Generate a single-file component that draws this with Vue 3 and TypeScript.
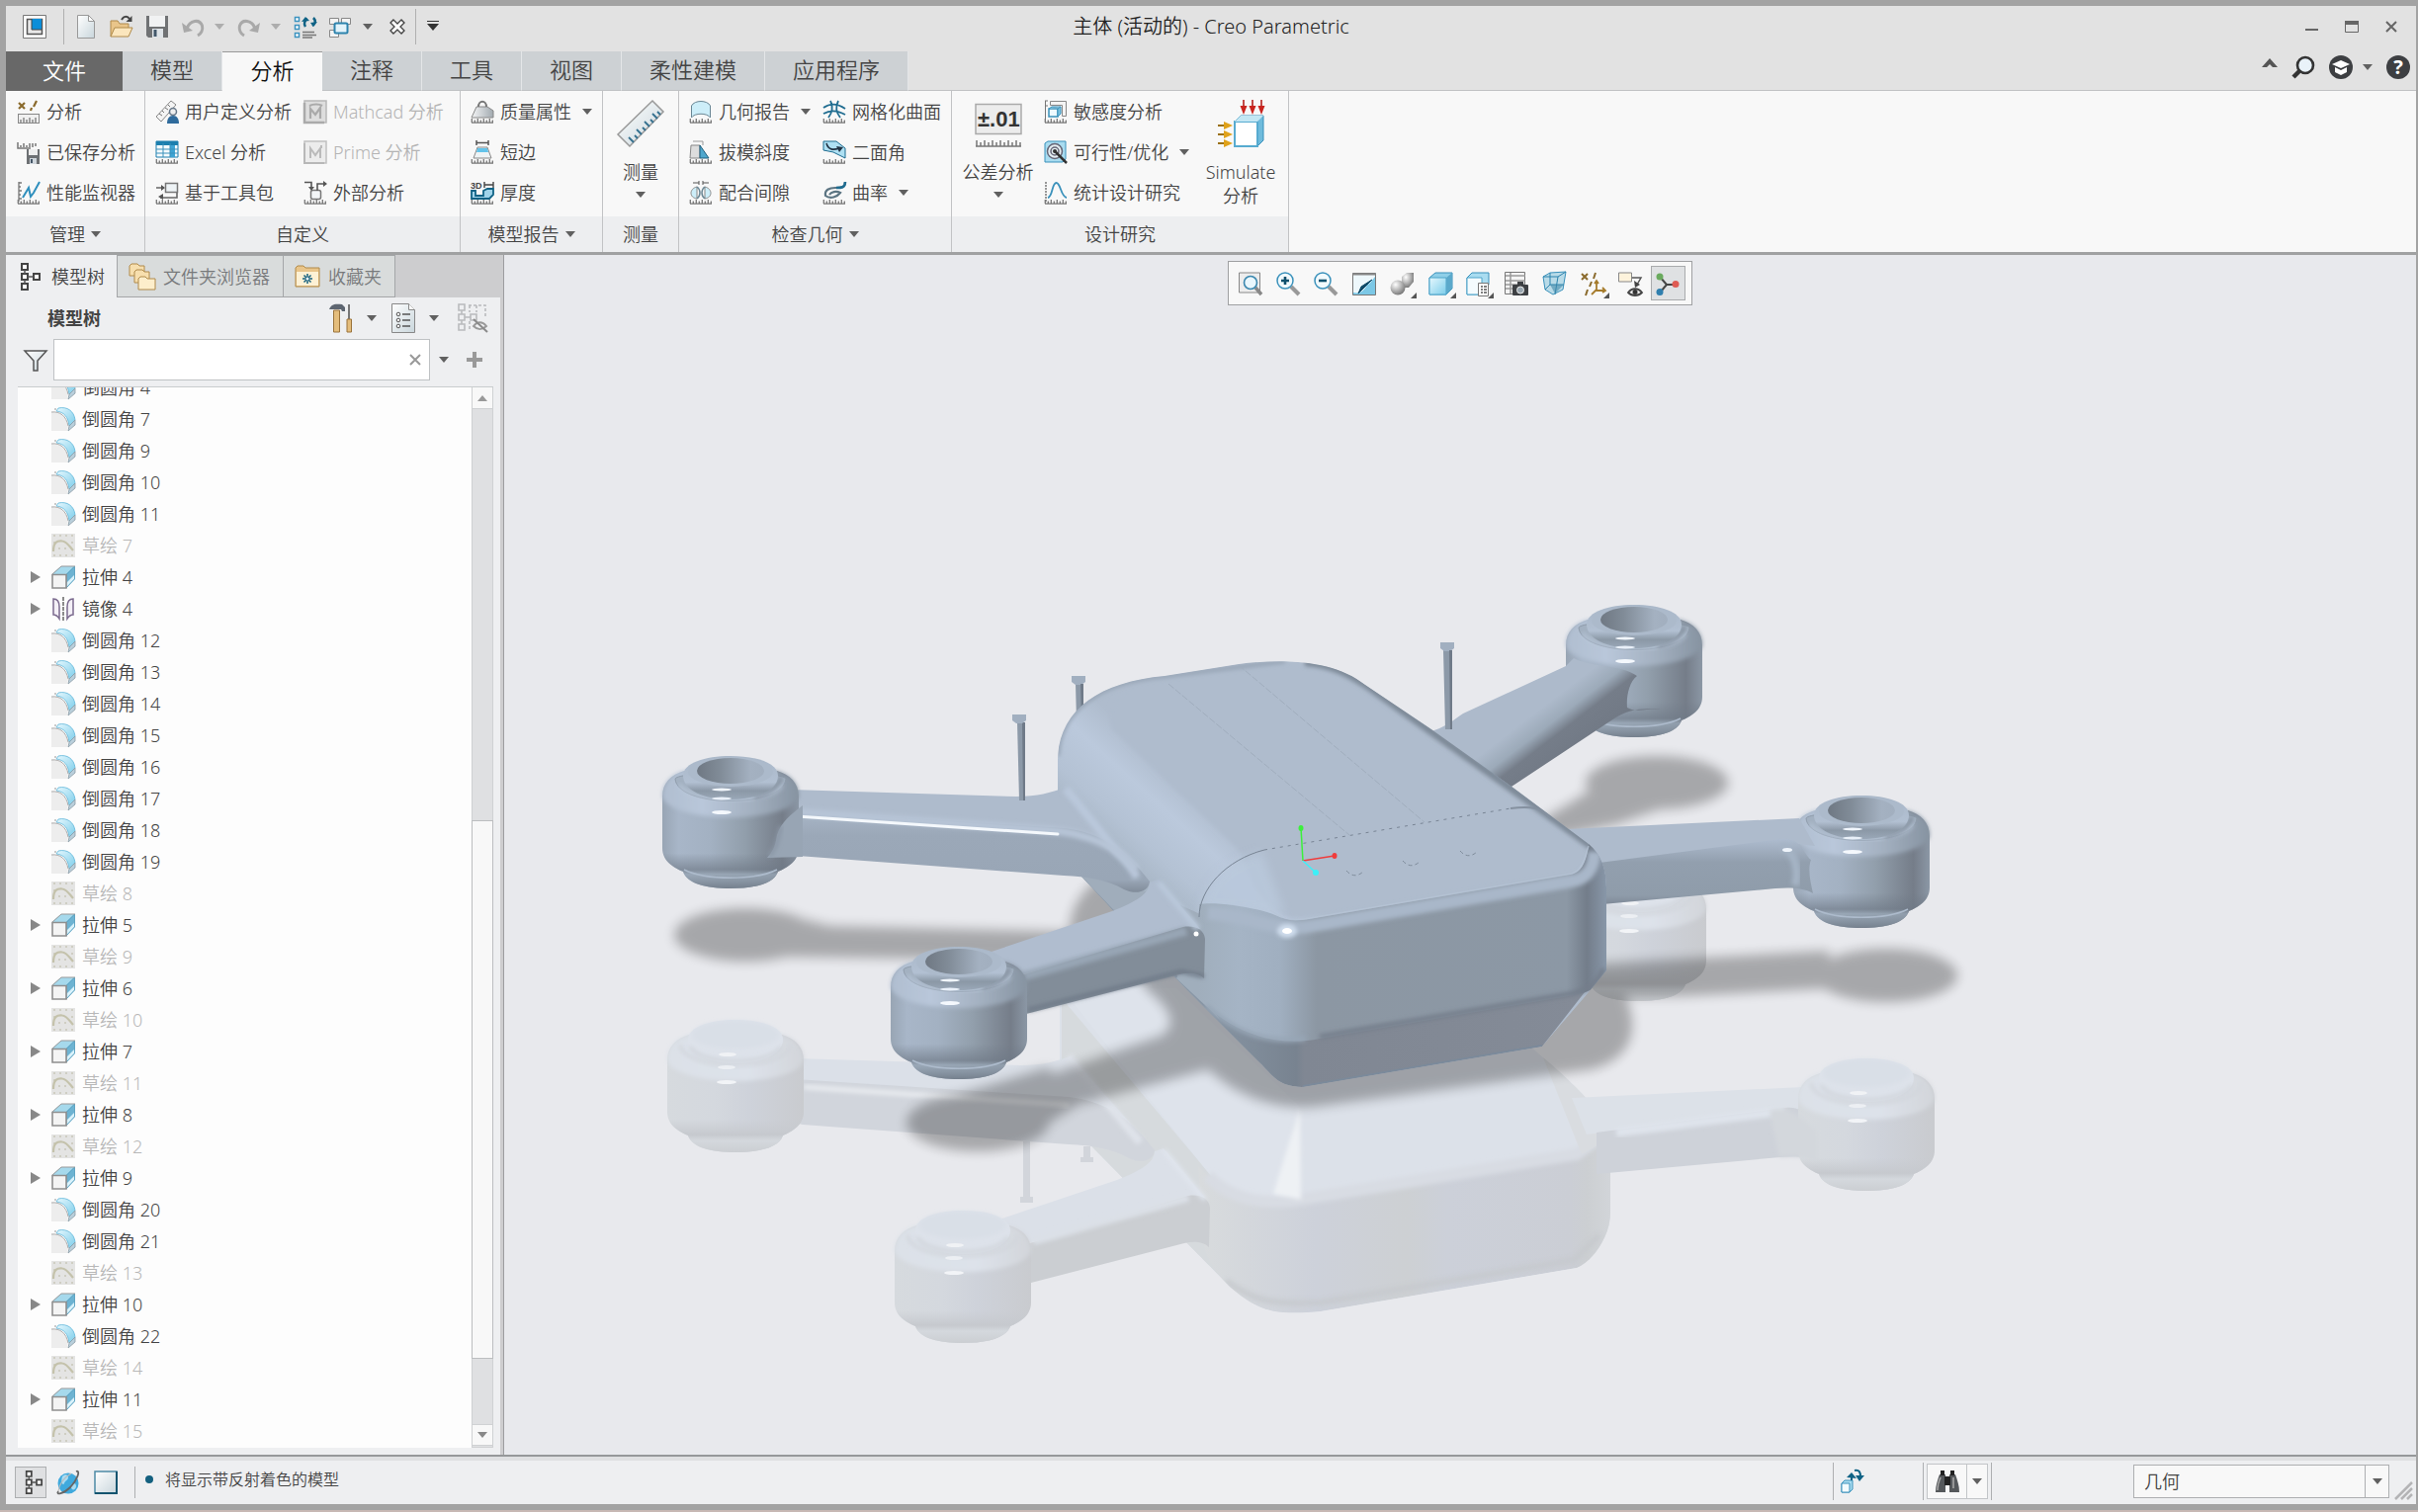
<script setup lang="ts">
interface Command { icon: string; label: string; menu?: boolean; off?: boolean }
interface Big { icon: string; lines: string[]; menu?: boolean }
interface Column { width: number; items?: Command[]; big?: Big }
interface Group { label: string; menu?: boolean; width: number; pad: number; columns: Column[] }

const ruler = (x = 1, w = 22): string => {
  let d = `M${x} 23.2h${w}`
  for (let i = 0; i <= w; i += 3) d += `M${x + i + 0.3} 23v${i % 6 === 0 ? -4 : -2.5}`
  return `<path d="${d}" stroke="#777" stroke-width="1.3" fill="none"/>`
}

const icons: Record<string, string> = {
  app: '<path d="M.5.5h23v23H.5z" fill="#fff" stroke="#777"/><path d="M4.500 4.500h15v15h-15z" fill="#e8e8e8" stroke="#555" stroke-width="1.500"/><path d="M9 4h10v11H9z" fill="#0a8ed9"/><path d="M9 4v11h10" fill="none" stroke="#444"/>',
  new: '<path d="M3.500.5h11l6 6v17h-17z" fill="url(#paper)" stroke="#999"/><path d="M14.500.5v6h6z" fill="#fff" stroke="#999"/>',
  open: '<path d="M1 22V6h7l2 3h9v5" fill="#e9c58a" stroke="#b08a4a"/><path d="M1 22l4-9h18l-4 9z" fill="#fbe6bd" stroke="#b08a4a"/><path d="M12 5c2-4 6-4 8-1" fill="none" stroke="#444" stroke-width="2"/><path d="M22.500 1v6h-6z" fill="#444"/>',
  save: '<path d="M1 1h22v22H3l-2-2z" fill="#707274"/><path d="M4 1h16v11H4z" fill="#f1f2f3"/><path d="M7 14h11v9H7z" fill="#dfe4e8"/><path d="M8.500 15h3v7h-3z" fill="#43586b"/>',
  undo: '<path d="M6 14C9 5 19 4 21.500 11c1 4-1 8-4.500 10" fill="none" stroke="#a9a9a9" stroke-width="3"/><path d="M1 8l2 10 9-2z" fill="#a9a9a9"/>',
  redo: '<path d="M18 14C15 5 5 4 2.500 11c-1 4 1 8 4.500 10" fill="none" stroke="#a9a9a9" stroke-width="3"/><path d="M23 8l-2 10-9-2z" fill="#a9a9a9"/>',
  regen: '<path d="M1.500 2.500h4v4h-4zM1.500 10.500h4v4h-4zM1.500 18.500h4v4h-4z" fill="#fff" stroke="#3c93c0" stroke-width="1.500"/><path d="M9 17.500h12M9 20.500h14M9 23h10" stroke="#777" stroke-width="1.500"/><path d="M12 12c-2-3-1-6 2-8M20 3c3 3 2 6-1 8" fill="none" stroke="#0f6285" stroke-width="2.500"/><path d="M8 7l4-5 4 4zM24 7l-4 5-3-4z" fill="#0f6285"/>',
  windows: '<path d="M.5 3.500h9v6h-9zM12.500 3.500h9v6h-9zM.5 15.500h9v7h-9z" fill="#f3f3f3" stroke="#888"/><rect x="5.500" y="8.500" width="13" height="10" rx="1.500" fill="#e3f3fa" stroke="#2d83ad" stroke-width="2"/>',
  closewin: '<path d="M6 6l12 12M18 6L6 18" stroke="#444" stroke-width="5.500"/><path d="M7 7l10 10M17 7L7 17" stroke="#fff" stroke-width="3"/>',
  analysis: '<path d="M2 3l6 6M8 3L2 9M20 1l-3 6M15 8l-1 3" stroke="#8a6a2c" stroke-width="2.200"/><rect x="1.500" y="14.500" width="21" height="9" fill="#f0f0f0" stroke="#888"/><path d="M4 23v-3M7 23v-5M10 23v-3M13 23v-5M16 23v-3M19 23v-5" stroke="#555"/>',
  saved: '<path d="M1 2v6h13M4 7V5M7 7V3M10 7V5M13 7V3M16 7V3M19 6V3" fill="none" stroke="#777" stroke-width="1.500"/><path d="M10 9h13v15H10z" fill="#6d7073"/><path d="M12 9h9v6h-9z" fill="#eee"/><path d="M13 18h7v6h-7z" fill="#cfd6dc"/><path d="M14 19h2v4h-2z" fill="#456"/>',
  monitor: `<path d="M2 1v20M2 2h3M2 6h2M2 10h3M2 14h2M2 18h3" stroke="#777" stroke-width="1.300"/><path d="M6 17l6-10 2 9 3-4 6-11" fill="none" stroke="#2f8fbd" stroke-width="2"/>${ruler()}`,
  userdef: '<path d="M1 17L16 1l5 4L6 22z" fill="#f4f4f4" stroke="#888"/><path d="M4 14l3 2M7 11l2 2M10 8l3 2M13 5l2 2" stroke="#777"/><circle cx="18" cy="12" r="3.500" fill="#eee" stroke="#678" stroke-width="1.500"/><path d="M12 24c0-5 2-8 6-8s6 3 6 8z" fill="#2f6b9c"/>',
  excel: `<path d="M1 1h22v16H1z" fill="#f4fafd" stroke="#1c7fae"/><path d="M1 1h22v4H1z" fill="#1c7fae"/><path d="M15 5h5v12h-5z" fill="#3ea4d4"/><path d="M1 9h22M1 13h22M8 3v14M15 3v14" stroke="#3a91bb"/>${ruler()}`,
  toolkit: `<path d="M10.500 2.500h12v9h-12z" fill="#eef3f6" stroke="#777" stroke-width="1.500"/><path d="M1 7h8M22 12v5H5" fill="none" stroke="#666" stroke-width="1.600"/><path d="M6 4l4 3-4 3zM8 13l-5 3 5 3z" fill="#555"/>${ruler()}`,
  mathcad: '<path d="M1 1h22v22H1z" fill="#dedede" stroke="#b8b8b8" stroke-width="1.500"/><path d="M1 3v20h20" fill="none" stroke="#aaa" stroke-width="2.500"/><path d="M7 19V9l5 6 5-7v11M6 6c4-2 10-2 13 0" fill="none" stroke="#aaa" stroke-width="2.200"/>',
  prime: '<path d="M1 1h22v22H1z" fill="#ececec" stroke="#c0c0c0" stroke-width="1.500"/><path d="M1 3v20h20" fill="none" stroke="#b8b8b8" stroke-width="2"/><path d="M7 18V8l5 7 5-7v10M18 5v3" fill="none" stroke="#bababa" stroke-width="2"/>',
  external: `<rect x="7.500" y="9.500" width="10" height="9" rx="2" fill="#f3f6f8" stroke="#777" stroke-width="1.500"/><path d="M1 1.500h7v6M14 10V3h8" fill="none" stroke="#555" stroke-width="1.600"/><path d="M5 6h6l-3 4zM20 0l4 3-4 3z" fill="#555"/>${ruler()}`,
  mass: `<path d="M6 7h11l6 4v7H1z" fill="url(#weight)" stroke="#888"/><path d="M8 7c0-7 8-7 8 0" fill="none" stroke="#777" stroke-width="2"/>${ruler()}`,
  edge: `<path d="M6 2.500h12M6 0v5M18 0v5" stroke="#555" stroke-width="1.500"/><path d="M7 7h10l4 11H3z" fill="#eef3f5" stroke="#888"/><path d="M7 8h10l1 4H6z" fill="#63c3ea"/>${ruler()}`,
  thick: `<text x="0" y="8" font-size="9" font-weight="700" font-family="Liberation Sans" fill="#444">3D</text><path d="M14 4h9M14 1v6M23 1v6" stroke="#444" stroke-width="1.400"/><path d="M1 10h4v5h8v-5l4-2h6v6l-4 4H1z" fill="#9fd3ea" stroke="#0f6285" stroke-width="1.800"/>${ruler()}`,
  measure: '<path d="M1 35L36 1l11 11L13 47z" fill="url(#paper)" stroke="#999" stroke-width="1.500"/><path d="M17 43l-5-5M21 39l-3-3M25 35l-5-5M29 31l-3-3M33 27l-5-5M37 23l-3-3M41 19l-5-5M44 15l-3-3" stroke="#34708f" stroke-width="1.800"/>',
  georep: `<path d="M2.500 18V6c3-6 16-6 19 0v12c-3-5-16-5-19 0z" fill="#cdeef9" stroke="#6a8795"/>${ruler()}`,
  draft: `<path d="M2 5h9v13H1z" fill="#ddd" stroke="#888"/><path d="M11 5l9 13h-9z" fill="#4fa7cd" stroke="#1f5f7d"/><path d="M4 1h10v4" fill="none" stroke="#999"/>${ruler()}`,
  fit: `<path d="M4 2h6M14 2h6M10 0v4M14 0v4" stroke="#555"/><path d="M8 6c-8 2-8 11 0 12zM16 6c8 2 8 11 0 12z" fill="#cdeef9" stroke="#888"/><path d="M8 6c4 3 4 9 0 12M16 6c-4 3-4 9 0 12" fill="none" stroke="#6a8795" stroke-width="1.500"/>${ruler()}`,
  mesh: `<path d="M1 8c7-5 15-4 22 1M1 14c7-4 15-3 22 1M8 1c3 5 2 12-2 17M16 1c-3 6-2 12 2 17" fill="none" stroke="#1f6c90" stroke-width="1.800"/>${ruler()}`,
  dihedral: `<path d="M1 1h13l9 7v10L11 12 1 10z" fill="#aee0f3" stroke="#1f6c90"/><path d="M4 3c2 7 7 7 13 5" fill="none" stroke="#234" stroke-width="1.600"/><path d="M14 6l7 1-4 5z" fill="#234"/>${ruler()}`,
  curv: `<path d="M23 1c0 6-4 6-10 6S2 9 3 15c5 4 12 1 15-3-4-2-9-1-11 2" fill="none" stroke="#5b7482" stroke-width="2.200"/><path d="M23 1c0 6-4 6-9 6" fill="none" stroke="#1f6c90" stroke-width="2.500"/>${ruler()}`,
  tol: '<path d="M1 4.500h46v30H1z" fill="#ececec" stroke="#aaa" stroke-width="1.500"/><text x="3" y="27" font-size="22" font-weight="700" font-family="Liberation Sans Narrow, Liberation Sans" fill="#333">±.01</text><path d="M1 47h46M2 47v-6M6 47v-4M10 47v-6M14 47v-4M18 47v-6M22 47v-4M26 47v-6M30 47v-4M34 47v-6M38 47v-4M42 47v-6M46 47v-4" stroke="#777" stroke-width="1.500"/>',
  sens: `<path d="M1.500 1v20M1 1h3M1 6h3" stroke="#777"/><path d="M6.500 1.500h16v15h-4v-11h-12z" fill="#f4f4f4" stroke="#888"/><path d="M5 9h9v8H5z" fill="#eefaff" stroke="#3a91bb" stroke-width="1.500"/><path d="M5 9l3-2h9l-3 2v8l3-3V7" fill="#7fc6e2" stroke="#3a91bb"/>${ruler()}`,
  feas: '<path d="M1 3l3-2h18v18l-3 3H1z" fill="#a9dcf0" stroke="#3a91bb"/><circle cx="11" cy="11" r="7.500" fill="#e5eef2" stroke="#667" stroke-width="1.500"/><circle cx="11" cy="11" r="4" fill="none" stroke="#667" stroke-width="1.500"/><path d="M11 11l12 12" stroke="#333" stroke-width="2.500"/><circle cx="11" cy="11" r="2" fill="#333"/>',
  stat: `<path d="M2 1v20" stroke="#777" stroke-width="1.500" stroke-dasharray="2 1"/><path d="M4 17c5-1 4-15 8.500-15S17 16 23 17" fill="none" stroke="#3a91bb" stroke-width="1.800"/>${ruler()}`,
  simulate: '<path d="M18 22l6-6h23v25l-6 6H18z" fill="#6fbbdc" stroke="#3a91bb"/><path d="M18 22h23v25H18z" fill="#fff" stroke="#57abd0" stroke-width="2"/><path d="M18 22l6-6h23l-6 6z" fill="#c3e7f4"/><path d="M27 0v8M36 0v8M45 0v8" stroke="#b5201c" stroke-width="1.600"/><path d="M23.500 6h7L27 15zM32.500 6h7L36 15zM41.500 6h7L45 15z" fill="#c9251f"/><path d="M1 26h8M1 35h8M1 44h8" stroke="#9a7010" stroke-width="2"/><path d="M7 22l9 4-9 4zM7 31l9 4-9 4zM7 40l9 4-9 4z" fill="#e0a21a"/>',
  tree: '<path d="M2 1h6v6H2zM2 11h6v6H2zM2 21h6v6H2zM14 11h6v6h-6z" fill="#fff" stroke="#444" stroke-width="2"/><path d="M5 7v4M5 17v4M8 14h6" stroke="#555" stroke-width="1.500"/>',
  folders: '<path d="M1 13V3l2-2h6l2 2h5v10z" fill="#f7dfae" stroke="#b08a4a"/><path d="M6 20V9l2-2h6l2 2h5v11z" fill="#f7dfae" stroke="#b08a4a"/><path d="M10 27V16l2-2h5l2 2h8v11z" fill="#fdeecb" stroke="#b08a4a"/>',
  fav: '<path d="M1 23V4l2-2h6l2 2h14v19z" fill="#e9c58a" stroke="#b08a4a"/><path d="M2 8h22v14H2z" fill="#fdf1d5"/><path d="M13 10v10M8 15h10M9.500 11.500l7 7M16.500 11.500l-7 7" stroke="#14607f" stroke-width="1.500"/><circle cx="13" cy="15" r="1.500" fill="#fff"/>',
  hammer: '<path d="M1 7c2-5 5-6 13-5l3 3v4h-3l-1-2H5z" fill="#5d6570"/><path d="M5.500 8h6v22h-6z" fill="#e4bd7c" stroke="#9a733a"/><path d="M21 2v15" stroke="#777" stroke-width="2"/><path d="M19 17h4.500v13H19z" fill="#e4bd7c" stroke="#9a733a"/>',
  list: '<path d="M.5.500h17l6 6v23H.5z" fill="url(#paper)" stroke="#888"/><path d="M17.500.5v6h6" fill="#fff" stroke="#888"/><g fill="#fff" stroke="#555"><circle cx="7" cy="11" r="1.800"/><circle cx="7" cy="17" r="1.800"/><circle cx="7" cy="23" r="1.800"/></g><path d="M11 11h8M11 17h8M11 23h8" stroke="#555" stroke-width="1.500"/>',
  hidetree: '<g fill="none" stroke="#b9bbbd" stroke-width="1.600"><path d="M1 1h6v6H1zM1 11h6v6H1zM1 21h6v6H1zM13 11h6v6h-6zM4 7v4M4 17v4M7 14h6"/><path d="M11 2h17v12M12 2v7M19 2v7M12 18v8" stroke-dasharray="3 2"/></g><path d="M16 23c4-5 9-5 13 0-4 4-9 4-13 0z" fill="none" stroke="#999" stroke-width="2"/><path d="M16 16l14 13" stroke="#8a8a8a" stroke-width="2"/>',
  funnel: '<path d="M1 3h22l-9 10v10h-4V13z" fill="url(#paper)" stroke="#555" stroke-width="1.500"/>',
  round: '<path d="M0 5c9-1 15 5 17 14l-1 5H0z" fill="#ededed"/><path d="M7 1c9-2 16 3 17 12l-6 6C17 10 13 5 5 4z" fill="url(#sky)" stroke="#5fb6d9" stroke-width=".8"/><path d="M18 19l6-6v5l-7 6z" fill="#b9cfdb" stroke="#8a9aa5" stroke-width=".8"/><path d="M0 5c9-1 15 4 17 14" fill="none" stroke="#aaa"/><circle cx="4" cy="2" r=".8" fill="#888"/>',
  sketch: '<path d="M0 0h24v24H0z" fill="#e4e4e3"/><g fill="#c8c7b8"><circle cx="3" cy="2" r="1"/><circle cx="9" cy="2" r="1"/><circle cx="15" cy="2" r="1"/><circle cx="21" cy="2" r="1"/><circle cx="3" cy="9" r="1"/><circle cx="21" cy="9" r="1"/><circle cx="8" cy="15" r="1"/><circle cx="14" cy="15" r="1"/><circle cx="3" cy="22" r="1"/><circle cx="9" cy="22" r="1"/><circle cx="15" cy="22" r="1"/><circle cx="21" cy="22" r="1"/></g><path d="M2 18C2 8 6 7 11 7.500c4 0 7 5 11 9.500" fill="none" stroke="#c4c2ab" stroke-width="2.200"/>',
  extrude: '<path d="M1 9l9-8h13.500v13L15 23z" fill="#6db3d2"/><path d="M1 9l9-8h13.500L15 9z" fill="#a6d9ec"/><path d="M15 22.500l8.500-9v-4L15 18z" fill="#d9f2fb"/><path d="M15 9.500l8.500-8.500v13L15 23z" fill="none" stroke="#4b98ba" stroke-width=".8"/><path d="M1 9.500h14v13.500H1z" fill="#f4f4f4" stroke="#8f8f8f" stroke-width="1.600"/><path d="M1 9l9-8h14" fill="none" stroke="#999"/>',
  mirror: '<path d="M12 0v24" stroke="#666" stroke-width="1.500" stroke-dasharray="4 1"/><path d="M2 2c5 0 6 4 6 8s0 9 0 12c-2-3-3-4-6-4zM22 2c-5 0-6 4-6 8s0 9 0 12c2-3 3-4 6-4z" fill="#f4f0f7" stroke="#7b6a8e" stroke-width="1.500"/>',
  zoomfit: '<path d="M.5 1h21v20H.5z" fill="#ededed" stroke="#888"/><path d="M17 16l6 7" stroke="#888" stroke-width="3.500"/><circle cx="12" cy="11" r="6.500" fill="#e9f7fd" stroke="#3a87ae" stroke-width="1.600"/>',
  zoomin: '<path d="M15 15l8 8" stroke="#999" stroke-width="4"/><circle cx="9" cy="9" r="8" fill="#f2fafd" stroke="#3a91bb" stroke-width="1.500"/><path d="M9 5v8M5 9h8" stroke="#0f506d" stroke-width="2.600"/>',
  zoomout: '<path d="M15 15l8 8" stroke="#999" stroke-width="4"/><circle cx="9" cy="9" r="8" fill="#f2fafd" stroke="#3a91bb" stroke-width="1.500"/><path d="M5 9h8" stroke="#0f506d" stroke-width="2.600"/>',
  repaint: '<path d="M.5 1.500h23v22H.5z" fill="#7cc8e6" stroke="#777"/><path d="M1 2h22v3c-4 5-6 8-8 8C13 18 8 23 1 21z" fill="#eef8fc"/><path d="M.5 1.500h23v2H.5z" fill="#888"/><path d="M20 8l-9 9-5 5 3-7z" fill="#0f4a68" stroke="#0f4a68"/>',
  shade: '<path d="M12 5l5-4h7v9l-5 6h-7z" fill="url(#ball)"/><circle cx="8" cy="16" r="7.500" fill="url(#ball)"/><path d="M21 27l6-6v6z" fill="#555"/>',
  box: '<path d="M1 6l6-5h17v16l-6 6H1z" fill="#8fcfe8" stroke="#3a91bb"/><path d="M1 6h17v17H1z" fill="url(#sky)" stroke="#4da5ca"/><path d="M18 23V6l6-5v16z" fill="#5ba9cb"/><path d="M22 27l6-6v6z" fill="#555"/>',
  saveview: '<path d="M1 6l5-5h17v12H13v10H1z" fill="#a9dcf0" stroke="#3a91bb"/><path d="M1 6h15v17H1z" fill="#f4fbfe" stroke="#4da5ca"/><path d="M12.500 11.500h10v13h-10z" fill="#fff" stroke="#777"/><path d="M15 15h2M18 15h3M15 18h2M18 18h3M15 21h2M18 21h3" stroke="#555" stroke-width="1.500"/><path d="M22 27l6-6v6z" fill="#555"/>',
  views: '<path d="M.5.500h20v22H.5z" fill="#f4f4f4" stroke="#777"/><path d="M1 4h20M1 9h20M1 13h20M1 17h20M6 1v21" stroke="#999" stroke-width="1.500"/><rect x="8" y="13" width="16" height="11" rx="1" fill="#3d4043"/><path d="M13 10h6v4h-6z" fill="#3d4043"/><circle cx="16" cy="18.500" r="3.500" fill="#9aa7b0" stroke="#eee"/>',
  persp: '<path d="M1 5l7-4 16-1-3 18-10 5-8-5z" fill="#b9dbe8" stroke="#3a91bb"/><path d="M1 5h15l8-5M16 5l-3 18M8 1v12L3 18M8 13h14" fill="none" stroke="#2d83ad"/><path d="M8 13h14l-9 9z" fill="#3f88aa" opacity=".6"/>',
  datum: '<path d="M1 2l6 6M7 2L1 8M15 1l-2 6M11 10l-2 5M7 18l-2 6" stroke="#8a6a2c" stroke-width="2"/><path d="M16 10v9h8M16 18l-5 5M14 12l2-3 2 3M22 16l3 3-3 2" fill="none" stroke="#a67c2c" stroke-width="1.800"/><path d="M23 27l6-6v6z" fill="#555"/>',
  annot: '<path d="M.5 1h13v9H.5z" fill="#fdf3dc" stroke="#888"/><path d="M14 6h9l-4 7" fill="none" stroke="#555" stroke-width="1.500"/><path d="M16 9l1 7 5-3z" fill="#444"/><path d="M10 21c4-5 10-5 14 0-4 4-10 4-14 0z" fill="#eee" stroke="#444" stroke-width="1.800"/><circle cx="17" cy="20.500" r="2.500" fill="#333"/>',
  spin: '<path d="M4 5l7 8-6 7M11 13h8" fill="none" stroke="#444" stroke-width="2"/><circle cx="4" cy="5" r="3.500" fill="#6aaa5e"/><circle cx="20" cy="12.500" r="3.500" fill="#df5b53"/><circle cx="4" cy="20.500" r="3.500" fill="#2f7fae"/>',
  globe: '<circle cx="12" cy="13" r="10.500" fill="#3fa9dd"/><path d="M6 6c3-3 6-2 6 1s-3 3-4 6-4-1-2-7zM15 14c3-2 5-1 5 2s-3 4-4 3-2-3-1-5z" fill="#a8dcf3"/><path d="M2 21c-3 4 5 3 12-4S25-1 20 1" fill="none" stroke="#666" stroke-width="1.800"/><path d="M2 21C3 14 8 7 15 3" fill="none" stroke="#bbb" stroke-width="1.200"/>',
  screen: '<path d="M1 1h22v22H1z" fill="url(#paper)" stroke="#4d8aa5" stroke-width="1.500"/><path d="M1 23h22V1" fill="none" stroke="#14546f" stroke-width="2"/>',
  update: '<path d="M1 14l3-3h8v9l-3 3H1z" fill="#a9dcf0" stroke="#3a91bb"/><path d="M1 14h8v9H1z" fill="#f4fbfe" stroke="#3a91bb"/><path d="M11 11V5M14 1c5-1 6 2 6 6" fill="none" stroke="#0f6285" stroke-width="2"/><path d="M6 8l5-5 5 6zM15 6h9l-5 6z" fill="#0f6285"/>',
  binoc: '<path d="M4 5h6v18H0c0-7 2-12 4-18zM14 5h6c2 6 4 11 4 18H14z" fill="#55585b"/><path d="M9 7h6v9H9zM5 1h4v5H5zM15 1h4v5h-4z" fill="#222"/><path d="M5 8c-2 5-3 9-3 13M18 8v11" stroke="#aaa" stroke-width="1.500"/>',
  find: '<circle cx="14" cy="10" r="8" fill="#e9f2f9" stroke="#333" stroke-width="2.600"/><path d="M8 16l-6 6" stroke="#333" stroke-width="4.500"/>',
  learn: '<circle cx="12" cy="12" r="12" fill="#3d3f42"/><path d="M12 5l9 4-9 4-9-4z" fill="#fff"/><path d="M6 12v5l6 3 6-3v-5l-6 3z" fill="#fff"/>',
}

const quick = [
  { icon: 'new', name: '新建' }, { icon: 'open', name: '打开' }, { icon: 'save', name: '保存' },
  { icon: 'undo', name: '撤消', menu: true, off: true }, { icon: 'redo', name: '重做', menu: true, off: true },
  { icon: 'regen', name: '重新生成' }, { icon: 'windows', name: '窗口', menu: true }, { icon: 'closewin', name: '关闭' },
]

const tabs = ['模型', '分析', '注释', '工具', '视图', '柔性建模', '应用程序']

const groups: Group[] = [
  { label: '管理', menu: true, width: 141, pad: 11, columns: [{ width: 129, items: [
    { icon: 'analysis', label: '分析' }, { icon: 'saved', label: '已保存分析' }, { icon: 'monitor', label: '性能监视器' }] }] },
  { label: '自定义', width: 319, pad: 10, columns: [
    { width: 150, items: [{ icon: 'userdef', label: '用户定义分析' }, { icon: 'excel', label: 'Excel 分析' }, { icon: 'toolkit', label: '基于工具包' }] },
    { width: 158, items: [{ icon: 'mathcad', label: 'Mathcad 分析', off: true }, { icon: 'prime', label: 'Prime 分析', off: true }, { icon: 'external', label: '外部分析' }] }] },
  { label: '模型报告', menu: true, width: 144, pad: 10, columns: [{ width: 133, items: [
    { icon: 'mass', label: '质量属性', menu: true }, { icon: 'edge', label: '短边' }, { icon: 'thick', label: '厚度' }] }] },
  { label: '测量', width: 77, pad: 0, columns: [{ width: 76, big: { icon: 'measure', lines: ['测量'], menu: true } }] },
  { label: '检查几何', menu: true, width: 276, pad: 10, columns: [
    { width: 135, items: [{ icon: 'georep', label: '几何报告', menu: true }, { icon: 'draft', label: '拔模斜度' }, { icon: 'fit', label: '配合间隙' }] },
    { width: 130, items: [{ icon: 'mesh', label: '网格化曲面' }, { icon: 'dihedral', label: '二面角' }, { icon: 'curv', label: '曲率', menu: true }] }] },
  { label: '设计研究', width: 341, pad: 0, columns: [
    { width: 93, big: { icon: 'tol', lines: ['公差分析'], menu: true } },
    { width: 154, items: [{ icon: 'sens', label: '敏感度分析' }, { icon: 'feas', label: '可行性/优化', menu: true }, { icon: 'stat', label: '统计设计研究' }] },
    { width: 90, big: { icon: 'simulate', lines: ['Simulate', '分析'] } }] },
]

const kinds: Record<string, { icon: string; open?: boolean; dim?: boolean }> = {
  倒圆角: { icon: 'round' },
  草绘: { icon: 'sketch', dim: true },
  拉伸: { icon: 'extrude', open: true },
  镜像: { icon: 'mirror', open: true },
}
const features: [string, number][] = [
  ['倒圆角', 4], ['倒圆角', 7], ['倒圆角', 9], ['倒圆角', 10], ['倒圆角', 11], ['草绘', 7], ['拉伸', 4], ['镜像', 4],
  ['倒圆角', 12], ['倒圆角', 13], ['倒圆角', 14], ['倒圆角', 15], ['倒圆角', 16], ['倒圆角', 17], ['倒圆角', 18], ['倒圆角', 19],
  ['草绘', 8], ['拉伸', 5], ['草绘', 9], ['拉伸', 6], ['草绘', 10], ['拉伸', 7], ['草绘', 11], ['拉伸', 8], ['草绘', 12], ['拉伸', 9],
  ['倒圆角', 20], ['倒圆角', 21], ['草绘', 13], ['拉伸', 10], ['倒圆角', 22], ['草绘', 14], ['拉伸', 11], ['草绘', 15],
]

const viewTools = [
  ['zoomfit', '重新调整'], ['zoomin', '放大'], ['zoomout', '缩小'], ['repaint', '重画'], ['shade', '渲染'], ['box', '显示样式'],
  ['saveview', '已保存方向'], ['views', '视图管理器'], ['persp', '透视图'], ['datum', '基准显示'], ['annot', '注释显示'], ['spin', '旋转中心'],
]

// Motor pod: outline, stepped collar and cap, all centred on the bore
const podBody = 'M-69,26C-69,12 -60,4 -47,0H47C60,4 69,12 69,26V78C69,92 57,98 48,102C44,114 25,119 0,119C-25,119 -44,114 -48,102C-57,98 -69,92 -69,78Z'
const podShoulder = 'M-69,26C-69,12 -60,4 -47,0H47C60,4 69,12 69,26C60,54 -60,54 -69,26Z'
const podStep = 'M-56,8C-54,38 54,38 56,8C52,0 -52,0 -56,8Z'
const podCap = 'M-48,5C-48,-8 -26,-15 0,-15S48,-8 48,5C48,19 28,29 0,29S-48,19 -48,5Z'
const podLayers = `
  <path d="${podBody}" fill="url(#podFill)"/>
  <path d="${podBody}" fill="url(#podBase)"/>
  <path d="${podShoulder}" fill="url(#shoulder)" filter="url(#soft2)"/>
  <path d="M-47,100C-25,111 25,111 47,100" fill="none" stroke="#adbbcc" stroke-width="1.500"/>
  <path d="${podStep}" fill="#a3b1c1" stroke="#8e9baa" stroke-width="1"/>
  <path d="M-52,14C-42,34 42,34 52,14" fill="none" stroke="#b8c6d8" stroke-width="3" filter="url(#soft2)"/>
  <path d="M24,27C42,22 50,14 51,6" fill="none" stroke="#697380" stroke-width="2.500" filter="url(#soft2)" opacity=".8"/>
  <path d="${podCap}" fill="url(#capFill)"/>
  <ellipse rx="43" ry="15" cy="1" fill="#acbacb"/><ellipse rx="34" ry="13" fill="url(#bore)"/>
  <ellipse cx="-9" cy="19" rx="10" ry="1.500" fill="#f1f6fd"/><ellipse cx="-9" cy="28" rx="10" ry="1.500" fill="#e9f0f9"/><ellipse cx="-9" cy="42" rx="10" ry="2" fill="#f4f8fd"/>`
const ghostLayers = `
  <path d="${podBody}" fill="url(#gPod)"/>
  <path d="${podBody}" fill="url(#gBase)"/>
  <path d="${podShoulder}" fill="url(#gShoulder)" filter="url(#soft2)"/>
  <path d="M-56,10C-52,38 52,38 56,10" fill="none" stroke="#d1d5db" stroke-width="3" filter="url(#soft2)"/>
  <path d="${podCap}" fill="#dde2ea"/><path d="M-46,12C-34,32 34,32 46,12" fill="none" stroke="#cfd3d9" stroke-width="3" filter="url(#soft2)"/>
  <ellipse rx="44" ry="14" cy="0" fill="#d9dfe7" filter="url(#soft2)"/>
  <ellipse cx="-8" cy="20" rx="9" ry="2" fill="#f0f2f5"/><ellipse cx="-9" cy="33" rx="9" ry="2" fill="#eceff3"/><ellipse cx="-9" cy="48" rx="10" ry="2" fill="#f2f4f7"/>`
const pods = { rear: [[1653, 627], [1883, 820]], front: [[739, 780], [970, 973]] }
const ghostPods = [[1657, 894], [1888, 1086], [744, 1047], [974, 1240]]

const hull = 'M1070,770C1070,720 1110,690 1178,684L1253,672C1300,666 1350,668 1381,693L1448,738L1528,795L1607,854C1620,864 1625,880 1625,898V982L1603,1009L1560,1059L1317,1100C1295,1099 1290,1092 1276,1077L1196,997L1093,886L1070,801Z'
const ghostHull = 'M1072,990V1075L1104,1160L1245,1303C1273,1327 1290,1331 1336,1327L1595,1283C1612,1276 1629,1250 1629,1228V1153C1629,1140 1620,1120 1553,1063L1400,960Z'

const armLeft = {
  top: 'M800,799L1028,806C1050,806 1062,802 1078,797L1136,862L1150,878C1128,852 1105,846 1076,845L805,826L790,822Z',
  side: 'M800,820L1076,838C1115,842 1140,862 1163,892C1162,902 1150,906 1137,900C1120,890 1100,887 1076,886L807,866L790,862Z',
}
const armFront = {
  top: 'M1000,964L1125,922C1150,912 1162,905 1163,893L1172,890L1214,940L1197,940L1035,986L1010,980Z',
  side: 'M1030,988L1197,938C1208,936 1218,940 1219,950L1218,990C1212,984 1202,984 1193,986L1038,1026Z',
}
const armRight = {
  top: 'M1585,839L1820,828L1836,856L1801,852L1740,858L1600,876Z',
  side: 'M1610,874L1740,857L1801,849C1822,846 1824,864 1832,870C1828,880 1832,894 1834,904C1824,898 1810,898 1796,899L1610,916Z',
}
</script>

<template>
  <div class="app">
    <svg class="shared" aria-hidden="true">
      <defs>
        <linearGradient id="paper" x1="0" y1="0" x2="1" y2="1"><stop offset="0" stop-color="#fff" /><stop offset="1" stop-color="#c9d6dc" /></linearGradient>
        <linearGradient id="sky" x1="0" y1="0" x2="1" y2="1"><stop offset="0" stop-color="#e6f8fe" /><stop offset="1" stop-color="#7ccdea" /></linearGradient>
        <linearGradient id="weight" x1="0" y1="0" x2="1" y2="0"><stop offset="0" stop-color="#f4f5f6" /><stop offset="1" stop-color="#a2aab0" /></linearGradient>
        <radialGradient id="ball" cx=".35" cy=".3" r=".8"><stop offset="0" stop-color="#fff" /><stop offset="1" stop-color="#6a6a6a" /></radialGradient>
      </defs>
    </svg>

    <header class="titlebar">
      <div class="quick">
        <svg class="i24" viewBox="0 0 24 24" v-html="icons.app" />
        <span class="rule first" />
        <template v-for="q in quick" :key="q.icon">
          <button class="tool" :class="{ wide: q.menu }" :aria-label="q.name">
            <svg class="i24" viewBox="0 0 24 24" v-html="icons[q.icon]" />
            <i v-if="q.menu" class="arrow" :class="{ pale: q.off }" />
          </button>
        </template>
        <span class="rule last" />
        <button class="tool more" aria-label="自定义工具栏"><i class="arrow dark" /></button>
      </div>
      <h1>主体 (活动的) - Creo Parametric</h1>
      <div class="winctl">
        <button aria-label="最小化"><svg viewBox="0 0 16 16"><path d="M1 11h13" stroke="#666" stroke-width="2" /></svg></button>
        <button aria-label="最大化"><svg viewBox="0 0 16 16"><path d="M1.500 2.500h13v11h-13z" fill="none" stroke="#666" /><path d="M1 2h14v4H1z" fill="#666" /></svg></button>
        <button aria-label="关闭"><svg viewBox="0 0 16 16"><path d="M3 3l10 10M13 3L3 13" stroke="#666" stroke-width="2" /></svg></button>
      </div>
    </header>

    <nav class="tabs">
      <button class="file">文件</button>
      <button v-for="t in tabs" :key="t" :class="{ on: t === '分析' }">{{ t }}</button>
      <div class="help">
        <button aria-label="折叠"><svg width="16" height="24" viewBox="0 0 16 24"><path d="M0 12l8-9 8 9h-5L8 9l-3 3z" fill="#555" /></svg></button>
        <button aria-label="搜索"><svg class="i24" viewBox="0 0 24 24" v-html="icons.find" /></button>
        <button class="learn" aria-label="学习"><svg class="i24" viewBox="0 0 24 24" v-html="icons.learn" /><i class="arrow" /></button>
        <button class="q" aria-label="帮助">?</button>
      </div>
    </nav>

    <section class="ribbon">
      <div v-for="g in groups" :key="g.label" class="group" :style="{ width: g.width + 'px' }">
        <div class="cols" :style="{ paddingLeft: g.pad + 'px' }">
          <div v-for="(c, i) in g.columns" :key="i" class="col" :style="{ width: c.width + 'px' }">
            <button v-for="m in c.items" :key="m.label" class="cmd" :disabled="m.off">
              <svg class="i24" viewBox="0 0 24 24" v-html="icons[m.icon]" />
              <span>{{ m.label }}</span>
              <i v-if="m.menu" class="arrow" />
            </button>
            <button v-if="c.big" class="big">
              <svg class="i48" viewBox="0 0 48 48" v-html="icons[c.big.icon]" />
              <span v-for="l in c.big.lines" :key="l">{{ l }}</span>
              <i v-if="c.big.menu" class="arrow" />
            </button>
          </div>
        </div>
        <div class="caption">{{ g.label }}<i v-if="g.menu" class="arrow" /></div>
      </div>
    </section>

    <main class="work">
      <aside class="panel">
        <div class="ptabs">
          <button class="on"><svg width="24" height="28" viewBox="0 0 24 28" v-html="icons.tree" />模型树</button>
          <button><svg width="28" height="28" viewBox="0 0 28 28" v-html="icons.folders" />文件夹浏览器</button>
          <button><svg width="26" height="26" viewBox="0 0 26 26" v-html="icons.fav" />收藏夹</button>
        </div>
        <div class="phead">
          <h2>模型树</h2>
          <button aria-label="设置"><svg width="24" height="32" viewBox="0 0 24 32" v-html="icons.hammer" /><i class="arrow" /></button>
          <button aria-label="显示"><svg width="24" height="30" viewBox="0 0 24 30" v-html="icons.list" /><i class="arrow" /></button>
          <button aria-label="隐藏树"><svg width="30" height="30" viewBox="0 0 30 30" v-html="icons.hidetree" /></button>
        </div>
        <div class="filter">
          <svg class="i24" viewBox="0 0 24 24" v-html="icons.funnel" />
          <div class="field">
            <input type="text" aria-label="过滤">
            <button aria-label="清除"><svg width="12" height="12" viewBox="0 0 12 12"><path d="M1 1l10 10M11 1L1 11" stroke="#999" stroke-width="2" /></svg></button>
          </div>
          <button aria-label="过滤选项"><i class="arrow" /></button>
          <button aria-label="添加"><svg width="16" height="16" viewBox="0 0 16 16"><path d="M8 0v16M0 8h16" stroke="#999" stroke-width="4" /></svg></button>
        </div>
        <div class="tree">
          <ul>
            <li v-for="[kind, n] in features" :key="kind + n" :class="{ dim: kinds[kind].dim }">
              <svg class="twist" viewBox="0 0 10 12"><path v-if="kinds[kind].open" d="M0 0l10 6-10 6z" fill="#888" /></svg>
              <svg class="i24" viewBox="0 0 24 24" v-html="icons[kinds[kind].icon]" />
              <span>{{ kind }} {{ n }}</span>
            </li>
          </ul>
          <div class="scroll">
            <button aria-label="向上"><i class="arrow up" /></button>
            <div class="before" /><div class="thumb" /><div class="after" />
            <button aria-label="向下"><i class="arrow grey" /></button>
          </div>
        </div>
      </aside>

      <section class="canvas">
        <svg class="model" viewBox="510 258 1934 1214" role="img" aria-label="主体">
          <defs>
            <clipPath id="hullClip"><path :d="hull" /></clipPath>
            <clipPath id="ghostClip"><path :d="ghostHull" /></clipPath>
            <filter id="shadowBlur" x="-10%" y="-10%" width="120%" height="120%"><feGaussianBlur stdDeviation="6" /></filter>
            <filter id="soft2" x="-20%" y="-20%" width="140%" height="140%"><feGaussianBlur stdDeviation="2" /></filter>
            <filter id="soft5" x="-20%" y="-20%" width="140%" height="140%"><feGaussianBlur stdDeviation="5" /></filter>
            <linearGradient id="podFill"><stop offset="0" stop-color="#98a5b4" /><stop offset=".12" stop-color="#a8b6c8" /><stop offset=".35" stop-color="#a3b1c2" /><stop offset=".6" stop-color="#929fac" /><stop offset=".88" stop-color="#757d89" /><stop offset="1" stop-color="#8b97a5" /></linearGradient>
            <linearGradient id="podBase" x1="0" y1="0" x2="0" y2="1"><stop offset=".7" stop-color="#6e7885" stop-opacity="0" /><stop offset=".84" stop-color="#6e7885" stop-opacity=".65" /><stop offset=".88" stop-color="#97a5b4" stop-opacity=".8" /><stop offset="1" stop-color="#75808d" /></linearGradient>
            <linearGradient id="shoulder"><stop offset="0" stop-color="#b0bed0" /><stop offset=".3" stop-color="#b9c7da" /><stop offset=".65" stop-color="#a4b1c1" /><stop offset="1" stop-color="#8693a1" /></linearGradient>
            <linearGradient id="capFill" x1="0" y1="0" x2="0" y2="1"><stop offset="0" stop-color="#a9b7c8" /><stop offset=".6" stop-color="#b2c0d2" /><stop offset=".8" stop-color="#8b98a6" /><stop offset="1" stop-color="#9aa8b8" /></linearGradient>
            <linearGradient id="bore"><stop offset="0" stop-color="#6f7883" /><stop offset=".35" stop-color="#818c98" /><stop offset=".8" stop-color="#a4b1c1" /><stop offset="1" stop-color="#a2afbf" /></linearGradient>
            <linearGradient id="leftFlank" gradientUnits="userSpaceOnUse" x1="1225" y1="765" x2="1105" y2="897"><stop offset=".2" stop-color="#afbccd" /><stop offset=".4" stop-color="#bbc9dc" /><stop offset=".62" stop-color="#b4c2d4" /><stop offset=".85" stop-color="#a4b2c0" /><stop offset="1" stop-color="#9eabb9" /></linearGradient>
            <linearGradient id="front" gradientUnits="userSpaceOnUse" x1="1212" y1="0" x2="1626" y2="0"><stop offset="0" stop-color="#a0aebc" /><stop offset=".1" stop-color="#a5b4c5" /><stop offset=".2" stop-color="#a0afc0" /><stop offset=".29" stop-color="#8c97a3" /><stop offset=".9" stop-color="#8c98a5" /><stop offset=".95" stop-color="#737d8a" /><stop offset="1" stop-color="#8998aa" /></linearGradient>
            <linearGradient id="belly" gradientUnits="userSpaceOnUse" x1="1210" y1="0" x2="1600" y2="0"><stop offset="0" stop-color="#8997a6" /><stop offset=".26" stop-color="#788390" /><stop offset=".28" stop-color="#808793" /><stop offset="1" stop-color="#848b97" /></linearGradient>
            <linearGradient id="armSide" x1="0" y1="0" x2="0" y2="1"><stop offset="0" stop-color="#a8b6c7" /><stop offset=".3" stop-color="#9ba8b8" /><stop offset=".85" stop-color="#99a6b6" /><stop offset="1" stop-color="#818c9a" /></linearGradient>
            <linearGradient id="armSideR" x1="0" y1="0" x2="0" y2="1"><stop offset="0" stop-color="#aebccf" /><stop offset=".35" stop-color="#929fae" /><stop offset=".85" stop-color="#8f9caa" /><stop offset="1" stop-color="#7c8795" /></linearGradient>
            <linearGradient id="rearArm" gradientUnits="userSpaceOnUse" x1="1540" y1="700" x2="1590" y2="765"><stop offset=".3" stop-color="#adbacb" /><stop offset=".52" stop-color="#9caab9" /><stop offset=".68" stop-color="#757d89" /><stop offset="1" stop-color="#717985" /></linearGradient>
            <linearGradient id="gPod"><stop offset="0" stop-color="#d6dade" /><stop offset=".35" stop-color="#d4d8de" /><stop offset=".6" stop-color="#ced2da" /><stop offset="1" stop-color="#c9cbcf" /></linearGradient>
            <linearGradient id="gBase" x1="0" y1="0" x2="0" y2="1"><stop offset=".72" stop-color="#c8cbd0" stop-opacity="0" /><stop offset=".85" stop-color="#c6c9ce" /><stop offset=".9" stop-color="#d4d8dd" /><stop offset="1" stop-color="#cbced2" /></linearGradient>
            <linearGradient id="gShoulder"><stop offset="0" stop-color="#dce1e8" /><stop offset=".6" stop-color="#dde2ea" /><stop offset="1" stop-color="#d2d5da" /></linearGradient>
            <linearGradient id="gFront" gradientUnits="userSpaceOnUse" x1="1215" y1="0" x2="1630" y2="0"><stop offset="0" stop-color="#d8dbdd" /><stop offset=".28" stop-color="#cdd1da" /><stop offset=".5" stop-color="#cdd0d3" /><stop offset=".6" stop-color="#ccd0d9" /><stop offset=".9" stop-color="#cbced5" /><stop offset=".94" stop-color="#cccfd2" /><stop offset="1" stop-color="#d2d5d9" /></linearGradient>
          </defs>

          <!-- floor reflection -->
          <g>
            <g :transform="`translate(${ghostPods[0][0]} ${ghostPods[0][1]})`" v-html="ghostLayers" />
            <g clip-path="url(#ghostClip)">
              <path :d="ghostHull" fill="#dce1e9" />
              <path d="M1074,1010V1078L1104,1160L1245,1303L1300,1218C1270,1214 1240,1204 1222,1186Z" fill="#d6dadd" />
              <path d="M1074,1000L1225,1190C1245,1212 1270,1216 1301,1215L1315,1120L1190,1000Z" fill="#dee3eb" />
              <path d="M1212,1180C1245,1214 1275,1220 1308,1217L1595,1168C1612,1164 1622,1152 1629,1143V1236C1629,1256 1612,1280 1595,1283L1336,1327C1290,1334 1270,1325 1245,1303C1228,1288 1218,1270 1216,1250Z" fill="url(#gFront)" />
              <path d="M1222,1190C1245,1214 1275,1218 1308,1215L1595,1168L1626,1145" fill="none" stroke="#d8dce3" stroke-width="12" filter="url(#soft2)" />
              <path d="M1240,1296C1270,1318 1290,1320 1336,1318L1592,1275L1618,1250" fill="none" stroke="#c6c9cd" stroke-width="6" filter="url(#soft2)" opacity=".8" />
              <path d="M1315,1122L1288,1208L1316,1214Z" fill="#eef1f4" filter="url(#soft2)" />
              <path d="M1561,1070L1581,1083L1624,1130L1628,1152L1600,1168Z" fill="#d9dce0" />
            </g>
            <path d="M1035,1155h7v56h3v6h-13v-6h3zM1096,1160h7v11h3v5h-13v-5h3z" fill="#d2d5db" />
            <g transform="translate(5 272)">
              <path :d="armLeft.top" fill="#dbe0e8" /><path :d="armLeft.side" fill="#d1d5dc" /><path d="M808,828L1076,846" stroke="#e8ebef" stroke-width="5" filter="url(#soft2)" /><path d="M1076,797L1148,884" stroke="#dfe3ea" stroke-width="8" filter="url(#soft2)" />
              <path :d="armFront.top" fill="#dbe0e8" /><path :d="armFront.side" fill="#cbced2" /><path d="M1040,984L1197,940" stroke="#dbe0e7" stroke-width="8" filter="url(#soft2)" /><path d="M1172,892L1214,942" fill="none" stroke="#e0e5ed" stroke-width="5" filter="url(#soft2)" />
              <path :d="armRight.top" fill="#dce1e8" /><path :d="armRight.side" fill="#ced2d9" /><path d="M1630,874L1800,852" stroke="#dfe4ec" stroke-width="9" filter="url(#soft2)" />
            </g>
            <g v-for="([x, y], i) in ghostPods.slice(1)" :key="'g' + i" :transform="`translate(${x} ${y})`" v-html="ghostLayers" />
            <path d="M1790,1124C1815,1116 1826,1138 1838,1144V1176C1824,1170 1812,1170 1800,1171Z" fill="#d3d7dc" filter="url(#soft2)" />
          </g>

          <!-- cast shadow -->
          <g filter="url(#shadowBlur)" opacity=".28">
            <ellipse cx="754" cy="946" rx="72" ry="27" /><path d="M795,926L840,937L1085,943V975L931,970L795,968Z" />
            <path d="M1085,960C1076,930 1090,905 1110,890L1400,900L1640,1000C1660,1035 1655,1070 1610,1082L1330,1120C1290,1124 1250,1108 1222,1082L1060,1126L1000,1110L1125,1065L1175,1048C1190,1038 1186,1022 1163,1004L1140,975Z" />
            <ellipse cx="989" cy="1136" rx="72" ry="29" /><path d="M935,1118L1060,1080L1090,1118L1040,1150Z" />
            <ellipse cx="1908" cy="987" rx="72" ry="27" /><path d="M1600,976L1850,962V1000L1830,1001L1700,1008H1600Z" />
            <ellipse cx="1676" cy="792" rx="72" ry="27" /><path d="M1540,842L1615,796L1690,815L1635,834L1560,850Z" />
          </g>

          <!-- rear arms and pods -->
          <g v-for="([x, y], i) in pods.rear" :key="'r' + i" :transform="`translate(${x} ${y})`" v-html="podLayers" />
          <path d="M1440,742C1460,738 1468,730 1480,722L1584,674L1592,666C1610,676 1640,672 1656,684C1648,690 1645,705 1646,716C1656,722 1668,716 1680,718C1660,716 1648,718 1633,727L1520,802Z" fill="url(#rearArm)" />
          <path :d="armRight.top" fill="#aebbcc" /><path :d="armRight.side" fill="url(#armSideR)" />
          <path d="M1802,856C1816,862 1820,880 1816,896" fill="none" stroke="#a5b4c5" stroke-width="8" filter="url(#soft2)" />
          <ellipse cx="1808" cy="860" rx="5" ry="2" fill="#eef4fb" />

          <!-- antenna pins -->
          <g fill="#8c99a8">
            <path d="M1460,658h9v80h-7zM1088,692h8v38h-7z" />
            <path d="M1457,650h14v6l-4,3h-6l-4,-3zM1084,684h14v6l-4,3h-6l-4,-3z" fill="#a1afc0" />
            <path d="M1466,658h3v80h-2zM1093,692h3v36h-2z" fill="#6f7a88" />
          </g>

          <!-- fuselage -->
          <g clip-path="url(#hullClip)">
            <path :d="hull" fill="url(#leftFlank)" />
            <path d="M1150,692L1253,674C1300,667 1345,672 1375,693L1600,856C1610,866 1604,880 1592,883L1317,929C1300,931 1290,924 1270,900L1255,862L1125,738C1118,715 1130,700 1150,692Z" fill="#afbccd" filter="url(#soft2)" />
            <path d="M1320,670C1350,672 1368,684 1385,695L1610,856" fill="none" stroke="#7d8997" stroke-width="8" filter="url(#soft2)" />
            <path d="M1070,765C1072,720 1110,690 1178,684L1300,669" fill="none" stroke="#95a3b3" stroke-width="4" filter="url(#soft2)" />
            <path d="M1213,925C1218,895 1235,872 1277,862L1300,925C1270,925 1235,915 1213,925Z" fill="#bac9dc" filter="url(#soft5)" opacity=".8" />
            <path d="M1093,886L1196,997L1240,1045L1276,1077C1290,1092 1295,1099 1317,1100L1560,1059L1610,995L1300,1045L1220,1000Z" fill="url(#belly)" />
            <path d="M1093,886L1170,905L1214,925L1213,1000L1234,1032Z" fill="#a0adbb" />
            <path d="M1213,915C1230,912 1270,918 1290,926C1300,931 1310,932 1325,930L1592,884C1604,880 1606,862 1607,854C1620,864 1625,880 1625,898V982C1624,995 1610,1004 1592,1007L1335,1051C1290,1060 1250,1045 1220,1018L1190,990L1213,950Z" fill="url(#front)" />
            <path d="M1222,924C1265,927 1285,942 1320,938L1592,891C1606,888 1612,878 1613,862" fill="none" stroke="#a9b7c9" stroke-width="13" filter="url(#soft2)" />
            <path d="M1285,921C1300,932 1310,932 1325,929L1590,884C1602,880 1604,865 1607,856" fill="none" stroke="#b6c4d5" stroke-width="1.500" opacity=".7" />
            <path d="M1335,1049L1592,1005C1606,1002 1618,992 1622,980" fill="none" stroke="#747e8b" stroke-width="5" filter="url(#soft2)" />
            <path d="M1220,1018C1250,1045 1280,1056 1320,1051" fill="none" stroke="#97a6b6" stroke-width="5" filter="url(#soft2)" />
            <path d="M1318,1099L1560,1058" stroke="#7b8a9b" stroke-width="2" />
          </g>
          <ellipse cx="1302" cy="942" rx="10" ry="7" fill="#cfdded" filter="url(#soft2)" /><ellipse cx="1302" cy="942" rx="5" ry="3" fill="#fff" />
          <path d="M1182,692L1365,845M1253,673L1441,832" stroke="#a0adbd" stroke-dasharray="7 2" fill="none" />
          <path d="M1279,860L1528,818" stroke="#788494" stroke-dasharray="3 5" fill="none" />
          <path d="M1528,818C1550,815 1560,818 1568,828" stroke="#8591a0" stroke-width="2" fill="none" />
          <path d="M1279,860C1240,870 1213,900 1213,928" stroke="#788494" fill="none" />
          <g fill="none" stroke="#7f8c9b" stroke-dasharray="4 3"><path d="M1362,881q8,9 17,1" /><path d="M1419,871q8,9 17,1" /><path d="M1477,861q8,9 17,1" /></g>

          <!-- front arms -->
          <path :d="armLeft.top" fill="#aebbcc" /><path :d="armLeft.side" fill="url(#armSide)" />
          <path d="M1078,798L1130,862C1140,872 1146,880 1150,888" fill="none" stroke="#bac8db" stroke-width="8" filter="url(#soft2)" />
          <path d="M808,822L1060,840C1100,843 1130,855 1150,880" fill="none" stroke="#b7c5d7" stroke-width="8" filter="url(#soft2)" />
          <path d="M806,826L1070,844" stroke="#f4f8fc" stroke-width="3" stroke-linecap="round" />
          <path :d="armFront.top" fill="#b0bdcf" /><path :d="armFront.side" fill="#828d99" />
          <path d="M1035,988L1200,942" stroke="#98a6b5" stroke-width="9" filter="url(#soft2)" />
          <path d="M1172,893L1212,940" fill="none" stroke="#b9c8da" stroke-width="6" filter="url(#soft2)" />
          <path d="M1214,945V984" fill="none" stroke="#9eacbc" stroke-width="8" filter="url(#soft2)" />
          <path d="M1040,1022L1195,983L1218,988" fill="none" stroke="#6e7987" stroke-width="4" filter="url(#soft2)" />
          <circle cx="1210" cy="945" r="2.500" fill="#fff" />
          <path d="M1029,731h8v79h-6z" fill="#8c99a8" /><path d="M1034,731h3v79h-2z" fill="#6f7a88" /><path d="M1024,723h14v6l-4,3h-6l-4,-3z" fill="#a1afc0" />

          <g v-for="([x, y], i) in pods.front" :key="'f' + i" :transform="`translate(${x} ${y})`" v-html="podLayers" />
          <path d="M812,815C800,824 790,832 786,845C784,858 781,862 776,868L812,867Z" fill="#98a5b4" />
          <path d="M790,836C786,850 786,858 778,866" fill="none" stroke="#8a96a5" stroke-width="4" filter="url(#soft2)" />

          <!-- coordinate triad -->
          <path d="M1318,871L1316,838" stroke="#3cf03c" stroke-width="1.500" /><ellipse cx="1316" cy="838" rx="2.500" ry="3" fill="#3cf03c" />
          <path d="M1318,871L1350,866" stroke="#f03c3c" stroke-width="1.500" /><ellipse cx="1350" cy="866" rx="2.500" ry="3" fill="#f03c3c" />
          <path d="M1318,871L1331,883" stroke="#3cf0f8" stroke-width="1.500" /><ellipse cx="1331" cy="883" rx="3" ry="3" fill="#3cf0f8" />
        </svg>

        <div class="viewbar">
          <button v-for="[icon, name] in viewTools" :key="icon" :aria-label="name" :class="{ on: icon === 'spin' }">
            <svg class="i24" viewBox="0 0 24 24" v-html="icons[icon]" />
          </button>
        </div>
      </section>
    </main>

    <footer class="status">
      <button class="sq on" aria-label="模型树"><svg width="18" height="24" viewBox="0 0 21 28" v-html="icons.tree" /></button>
      <button class="sq" aria-label="浏览器"><svg class="i24" viewBox="0 0 24 24" v-html="icons.globe" /></button>
      <button class="sq" aria-label="全屏"><svg class="i24" viewBox="0 0 24 24" v-html="icons.screen" /></button>
      <span class="bar" />
      <p><i class="dot" />将显示带反射着色的模型</p>
      <div class="right">
        <button class="upd" aria-label="重新生成"><svg class="i24" viewBox="0 0 24 24" v-html="icons.update" /></button>
        <div class="search">
          <button class="bin" aria-label="查找"><svg class="i24" viewBox="0 0 24 24" v-html="icons.binoc" /></button>
          <button class="drop" aria-label="查找选项"><i class="arrow" /></button>
        </div>
        <div class="pick">
          <select aria-label="选择过滤器"><option>几何</option></select>
          <span class="drop"><i class="arrow" /></span>
        </div>
        <svg class="grip" width="20" height="20" viewBox="0 0 20 20"><path d="M2 19L19 2M8 19L19 8M14 19l5-5" stroke="#b4b4b6" stroke-width="2.500" /></svg>
      </div>
    </footer>
  </div>
</template>

<style>
body { background: #a3a3a3; }
</style>

<style scoped>
.app {
  box-sizing: border-box;
  height: 100vh;
  padding: 6px 2px 6px 6px;
  border-bottom: 2px solid #c7b8b4;
  background: #a3a3a3;
  display: flex;
  flex-direction: column;
  font: 350 18px/24px "Noto Sans", "Noto Sans CJK SC", sans-serif;
  color: #444;
}
.app *, .app *::before { box-sizing: border-box; }
.shared { position: absolute; width: 0; height: 0; }
button { font: inherit; color: inherit; background: none; border: 0; padding: 0; display: flex; align-items: center; white-space: nowrap; }
svg { overflow: visible; flex: none; }
.i24 { width: 24px; height: 24px; }
.i48 { width: 48px; height: 48px; }
.arrow { flex: none; width: 0; height: 0; border: 5px solid transparent; border-top: 6px solid #606060; border-bottom: 0; }
.arrow.pale { border-top-color: #adadad; }
.arrow.grey { border-top-color: #888; }
.arrow.up { border-top: 0; border-bottom: 6px solid #999; }

.titlebar { height: 46px; flex: none; background: #e2e2e2; display: grid; grid-template-columns: 1fr auto 1fr; align-items: center; padding-bottom: 4px; }
.titlebar h1 { margin: 0; font-size: 20px; font-weight: inherit; color: #222; }
.quick { display: flex; align-items: center; padding-left: 17px; }
.rule { width: 1px; height: 36px; background: #b0b0b0; }
.rule.first { margin: 0 10px 0 17px; }
.rule.last { margin: 0 11px 0 -6px; }
.tool { width: 36px; }
.tool.wide { width: 57px; gap: 10px; }
.tool.more { width: 12px; }
.arrow.dark { border-width: 6px; border-top: 7px solid #333; border-bottom: 0; position: relative; }
.arrow.dark::before { content: ""; position: absolute; left: -6px; top: -10px; width: 12px; height: 1px; background: #333; }
.winctl { display: flex; justify-content: flex-end; gap: 24px; padding-right: 17px; }
.winctl svg { width: 16px; height: 16px; }

.tabs { height: 40px; flex: none; background: #e2e2e2; display: flex; box-shadow: inset 0 -1px #c0c2c4; }
.tabs > button { width: 101px; justify-content: center; padding-bottom: 3px; font-size: 22px; background: #cdd1d4; border-right: 1px solid #e4e6e8; border-bottom: 1px solid #c0c2c4; }
.tabs > button:nth-of-type(n + 7) { width: 145px; }
.tabs > .file { width: 118px; background: #686868; color: #fff; border: 0; }
.tabs > .on { background: #f8f8f8; color: #111; border: 0; border-top: 1px solid #999; }
.help { margin-left: auto; display: flex; align-items: center; padding: 0 6px 8px 0; gap: 14px; }
.learn { gap: 10px; }
.help .q { width: 24px; height: 24px; border-radius: 50%; background: #3d3f42; color: #fff; font-weight: 700; font-size: 20px; justify-content: center; }

.ribbon { flex: none; height: 163px; background: #f8f8f8; display: flex; }
.group { border-right: 1px solid #c2c3c5; display: flex; flex-direction: column; flex: none; background: linear-gradient(#f8f8f8 127px, #edeef0 127px); }
.cols { height: 127px; display: flex; }
.cmd { height: 41px; gap: 6px; }
.cmd .arrow { margin-left: 5px; }
.cmd:disabled { color: #b4b4b4; }
.big { width: 100%; flex-direction: column; padding-top: 9px; }
.big span { line-height: 24px; }
.big .i48 { margin-bottom: 13px; }
.big .arrow { margin-top: 8px; }
.caption { height: 36px; display: flex; align-items: center; justify-content: center; gap: 6px; }

.work { flex: 1; min-height: 0; display: flex; border-top: 3px solid #a0a1a2; border-bottom: 2px solid #96989a; background: #e8e9ed; }
.panel { width: 504px; flex: none; display: flex; flex-direction: column; background: #eeeff1; border-right: 1px solid #9c9da0; box-shadow: inset -3px 0 #cdcdcf; padding-right: 3px; }
.ptabs { display: flex; height: 43px; flex: none; background: #cdcdcf; }
.ptabs button { gap: 8px; padding-left: 11px; color: #77797b; background: #d9dcdc; border: 1px solid #a4a6a8; border-left: 0; width: 113px; }
.ptabs button:nth-child(2) { width: 168px; gap: 7px; }
.ptabs .on { padding-left: 14px; gap: 8px; background: #eeeff1; color: #444; border-width: 0 1px 0 0; }
.phead { height: 41px; flex: none; display: flex; align-items: center; padding: 0 13px 0 42px; }
.phead h2 { margin: 0 auto 0 0; font-size: 18px; font-weight: 700; }
.phead button { gap: 15px; }
.phead button:nth-of-type(2) { margin: 0 19px 0 15px; gap: 14px; }
.filter { height: 42px; flex: none; margin: 1px 18px 6px 18px; display: flex; align-items: center; }
.field { flex: 1; height: 42px; margin: 0 9px 0 6px; background: #fff; border: 1px solid #bfc2c4; display: flex; align-items: center; padding-right: 8px; }
.field input { flex: 1; border: 0; outline: 0; background: none; font: inherit; min-width: 0; padding: 0 8px; height: 100%; }
.filter > button:last-child { margin-left: 18px; }
.tree { flex: 1; min-height: 0; margin: 0 7px 7px 12px; border-top: 1px solid #c9ccce; background: #fdfdfd; display: flex; overflow: hidden; }
.tree ul { flex: 1; list-style: none; margin: -16px 0 0; padding: 0; height: 0; }
.tree li { height: 32px; display: flex; align-items: center; padding-left: 13px; }
.tree li .i24 { margin: 0 7px 0 11px; }
.tree .dim { color: #b8b8b8; }
.twist { width: 10px; height: 12px; }
.scroll { width: 22px; display: flex; flex-direction: column; background: #dfe0e2; border: 1px solid #cfd1d3; border-top: 0; padding-bottom: 1px; }
.scroll button { height: 22px; justify-content: center; background: #f8f8f8; border-bottom: 1px solid #cfd1d3; }
.scroll button:last-child { border-top: 1px solid #cfd1d3; }
.before { flex: 417; }
.thumb { flex: 545; background: #f8f8f8; border: 1px solid #bcbec0; margin: 0 -1px; }
.after { flex: 66; }

.canvas { flex: 1; min-width: 0; position: relative; }
.model { display: block; width: 100%; height: 100%; overflow: hidden; }
.viewbar { position: absolute; top: 6px; left: 732px; width: 470px; height: 45px; background: #f8f8f8; border: 1px solid #9fa0a2; display: flex; align-items: center; justify-content: space-between; padding: 0 6px 0 4px; }
.viewbar button { width: 35px; height: 35px; justify-content: center; }
.viewbar .on { background: #dfe1e3; border: 1px solid #a9abad; }

.status { flex: none; height: 48px; background: #eeeff1; border-top: 4px solid #dfe0e2; display: flex; align-items: center; padding-left: 9px; }
.sq { width: 32px; height: 32px; justify-content: center; margin-right: 6px; }
.sq.on { background: #dfe0e2; border: 1px solid #adafb1; padding-left: 6px; }
.bar { width: 1px; height: 32px; background: #adafb1; margin: 0 10px 0 7px; }
.status p { margin: 0; font-size: 16px; display: flex; align-items: center; gap: 12px; padding-bottom: 6px; }
.dot { width: 8px; height: 8px; border-radius: 50%; background: #14607f; }
.right { margin-left: auto; display: flex; height: 44px; align-items: center; padding-bottom: 2px; }
.upd { height: 38px; width: 91px; padding-left: 7px; border-left: 1px solid #adafb1; }
.search { height: 38px; display: flex; align-items: center; border: 1px solid #adafb1; border-width: 0 1px; padding: 0 3px; width: 70px; margin-right: 143px; }
.search button { height: 36px; background: #f8f8f8; border: 1px solid #c2c5c8; justify-content: center; }
.bin { width: 42px; }
.search .drop { width: 22px; margin-left: -1px; flex: none; }
.pick { width: 259px; height: 34px; border: 1px solid #adafb1; background: #f8f8f8; display: flex; }
.pick select { flex: 1; appearance: none; border: 0; background: none; font: inherit; color: inherit; padding: 0 10px; outline: 0; }
.pick .drop { width: 24px; border-left: 1px solid #adafb1; display: flex; align-items: center; justify-content: center; pointer-events: none; }
.grip { margin: 18px 3px 0 4px; }
</style>
